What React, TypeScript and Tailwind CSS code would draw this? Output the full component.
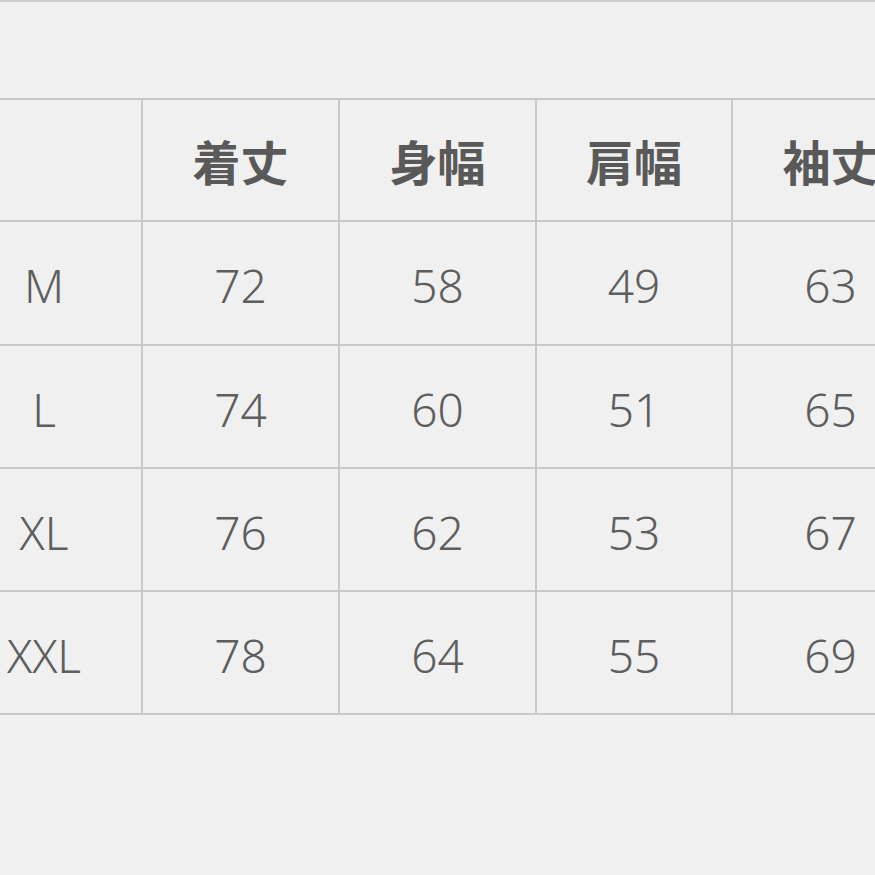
const header = ['', '着丈', '身幅', '肩幅', '袖丈'];

const rows = [
  ['M', '72', '58', '49', '63'],
  ['L', '74', '60', '51', '65'],
  ['XL', '76', '62', '53', '67'],
  ['XXL', '78', '64', '55', '69'],
];

export default function App() {
  return (
    <div className="w-[875px] h-[875px] overflow-hidden bg-[#f0f0f0] border-t-2 border-[#cdcdcd]">
      <div className="pt-[96px]">
        <div className="ml-[-53px] w-[990px] grid grid-cols-[194px_195px_195px_194px_195px] grid-rows-[120px_122px_121px_121px_121px] gap-[2px] py-[2px] bg-[#c9c9c9]">
          {header.map((h, i) => (
            <div
              key={'h' + i}
              className="bg-[#f0f0f0] flex items-center justify-center text-[48px] font-bold text-[#595959] font-['Noto_Sans_CJK_JP',sans-serif]"
            >
              {h}
            </div>
          ))}
          {rows.map((row) =>
            row.map((cell, j) => (
              <div
                key={row[0] + j}
                className="bg-[#f0f0f0] flex items-center justify-center pt-[5px] text-[46px] font-light text-[#5e5e5e] font-['Noto_Sans',sans-serif]"
              >
                {cell}
              </div>
            ))
          )}
        </div>
      </div>
    </div>
  );
}
